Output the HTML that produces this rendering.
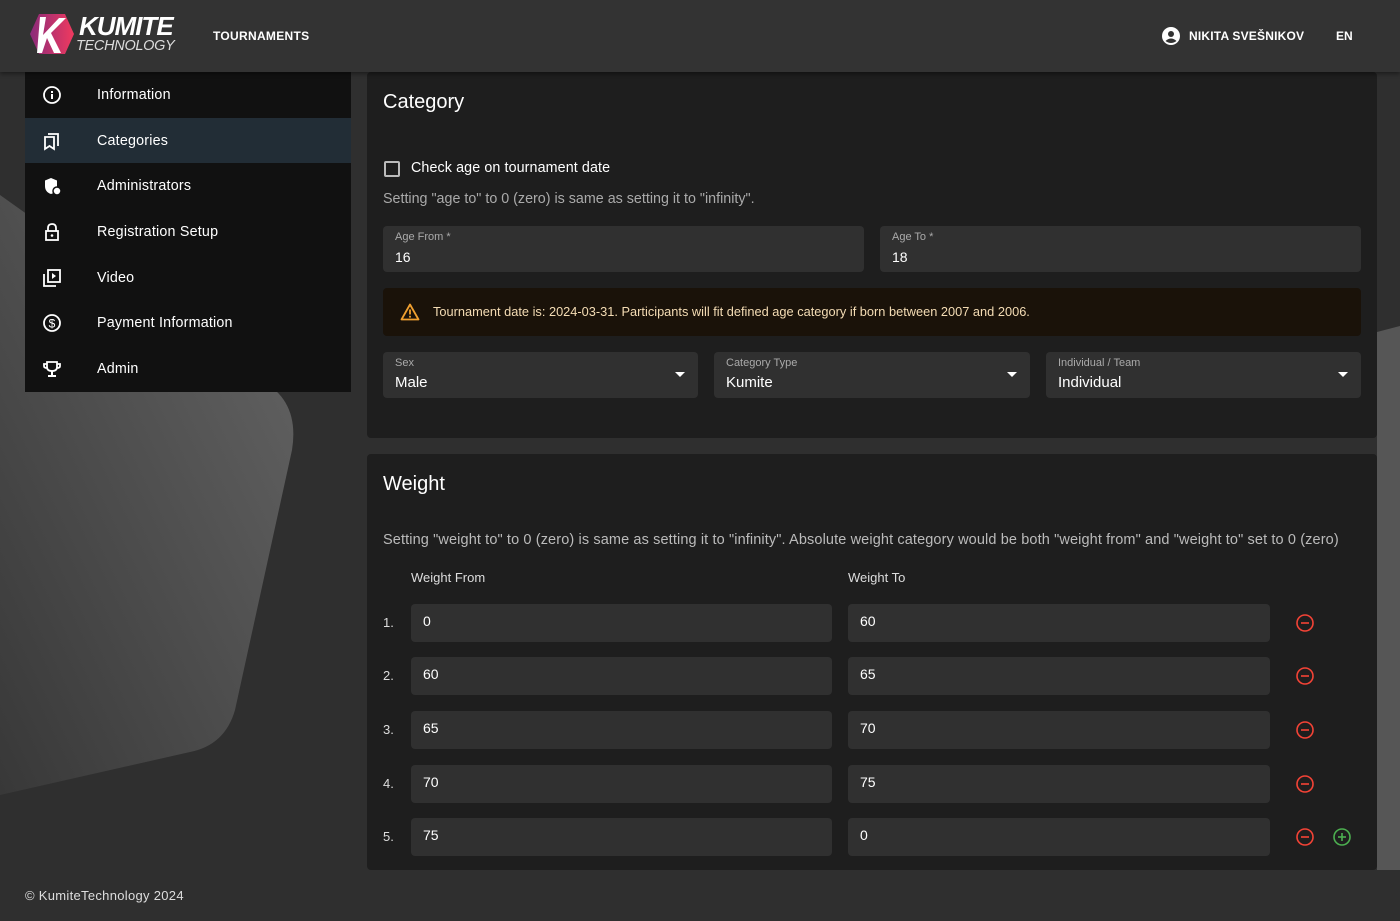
<!DOCTYPE html>
<html><head><meta charset="utf-8"><style>
*{box-sizing:border-box;margin:0;padding:0}
body{width:1400px;height:921px;overflow:hidden;background:#2f2f2f;font-family:"Liberation Sans",sans-serif;color:#fff;position:relative}
.hdr{position:absolute;left:0;top:0;width:1400px;height:72px;background:#333;box-shadow:0 2px 4px rgba(0,0,0,.4);z-index:3}
.side{position:absolute;left:25px;top:72px;width:326px;height:320px;background:#111;z-index:2}
.item{height:45.7px;display:flex;align-items:center;font-size:14.3px;letter-spacing:.2px}
.item svg{margin-left:17px;width:20px;height:20px}
.item span{margin-left:35px}
.item.act{background:#222d36}
.card{position:absolute;left:367px;width:1010px;background:#1e1e1e;border-radius:4px;z-index:2}
.f{position:absolute;background:#303030;border-radius:4px}
.lab{position:absolute;left:12px;top:5px;font-size:11px;color:#aaa}
.val{position:absolute;left:12px;top:22px;font-size:15px}
.arr{position:absolute;right:13px;top:20px;width:0;height:0;border-left:5px solid transparent;border-right:5px solid transparent;border-top:5px solid #fff}
.wi{position:absolute;height:38px;background:#303030;border-radius:4px;font-size:14px;padding:9px 12px}
.ic{position:absolute;width:18px;height:18px}
</style></head><body>
<svg style="position:absolute;left:0;top:0;z-index:0" width="1400" height="921">
<defs><linearGradient id="g" x1="1" y1="0" x2="0" y2="1"><stop offset="0" stop-color="#666"/><stop offset="1" stop-color="#383838"/></linearGradient></defs>
<path d="M0 195 L260 380 Q300 400 292 450 L235 710 Q225 745 190 752 L0 795 Z" fill="url(#g)"/>
<path d="M1377 332 L1400 326 L1400 870 L1377 870 Z" fill="#565656"/>
</svg>
<div class="hdr">
<svg style="position:absolute;left:29px;top:13px" width="46" height="42" viewBox="0 0 46 42"><defs><linearGradient id="lg" x1="0" x2="1"><stop offset="0" stop-color="#8a2a7a"/><stop offset="1" stop-color="#f03a5f"/></linearGradient></defs><path d="M10 1 H36 L45 21 L36 41 H10 L1 21 Z" fill="url(#lg)"/><path d="M11 4 L17 4 L14 22 L30 5 L37 5 L22 20 L32 40 L25 40 L18 25 L13 40 L8 40 Z" fill="#fff"/></svg>
<div style="position:absolute;left:79px;top:11px;font-size:26px;font-weight:bold;font-style:italic;letter-spacing:-1px;line-height:30px">KUMITE</div>
<div style="position:absolute;left:76px;top:38px;font-size:14.5px;font-style:italic;color:#ddd;letter-spacing:-.3px">TECHNOLOGY</div>
<div style="position:absolute;left:213px;top:29px;font-size:12px;font-weight:bold;letter-spacing:.3px">TOURNAMENTS</div>
<svg style="position:absolute;left:1162px;top:27px" width="18" height="18" viewBox="0 0 18 18"><circle cx="9" cy="9" r="9" fill="#fff"/><circle cx="9" cy="7" r="3" fill="#333"/><path d="M3.5 14 Q9 9 14.5 14 Q9 18 3.5 14Z" fill="#333"/></svg>
<div style="position:absolute;left:1189px;top:29px;font-size:12px;font-weight:bold;letter-spacing:.2px">NIKITA SVEŠNIKOV</div>
<div style="position:absolute;left:1336px;top:29px;font-size:12px;font-weight:bold">EN</div>
</div>
<div class="side">
<div class="item"><svg viewBox="0 0 20 20"><circle cx="10" cy="10" r="8" fill="none" stroke="#fff" stroke-width="1.8"/><rect x="9" y="9" width="2" height="5" fill="#fff"/><rect x="9" y="6" width="2" height="2" fill="#fff"/></svg><span>Information</span></div>
<div class="item act"><svg viewBox="0 0 20 20"><path d="M3 6 H12 V18 L7.5 15 L3 18 Z" fill="none" stroke="#fff" stroke-width="1.8"/><path d="M6 3 H16 V15" fill="none" stroke="#fff" stroke-width="1.8"/></svg><span>Categories</span></div>
<div class="item"><svg viewBox="0 0 20 20"><path d="M9 2 L15 4.5 V10 Q15 16 9 18 Q3 16 3 10 V4.5 Z" fill="#fff"/><circle cx="15" cy="15" r="4" fill="#fff" stroke="#111" stroke-width="1.5"/></svg><span>Administrators</span></div>
<div class="item"><svg viewBox="0 0 20 20"><path d="M6 9 V6 Q6 2 10 2 Q14 2 14 6 V9" fill="none" stroke="#fff" stroke-width="1.8"/><rect x="4" y="9" width="12" height="9" fill="none" stroke="#fff" stroke-width="1.8"/><circle cx="10" cy="13.5" r="1.3" fill="#fff"/></svg><span>Registration Setup</span></div>
<div class="item"><svg viewBox="0 0 20 20"><rect x="6" y="2" width="12" height="12" fill="none" stroke="#fff" stroke-width="1.8"/><path d="M2 6 V18 H14" fill="none" stroke="#fff" stroke-width="1.8"/><path d="M10 5 L14 8 L10 11Z" fill="#fff"/></svg><span>Video</span></div>
<div class="item"><svg viewBox="0 0 20 20"><circle cx="10" cy="10" r="8" fill="none" stroke="#fff" stroke-width="1.8"/><text x="10" y="14.5" font-size="12" text-anchor="middle" fill="#fff" font-family="Liberation Sans">$</text></svg><span>Payment Information</span></div>
<div class="item"><svg viewBox="0 0 20 20"><path d="M5 3 H15 V8 Q15 12 10 12 Q5 12 5 8 Z M5 5 H2 V7 Q2 9 5 9 M15 5 H18 V7 Q18 9 15 9" fill="none" stroke="#fff" stroke-width="1.8"/><rect x="9" y="12" width="2" height="4" fill="#fff"/><rect x="6" y="16" width="8" height="2" fill="#fff"/></svg><span>Admin</span></div>
</div>

<div class="card" style="top:72px;height:366px">
<div style="position:absolute;left:16px;top:19px;font-size:20px">Category</div>
<div style="position:absolute;left:17px;top:89px;width:16px;height:16px;border:2px solid #bbb;border-radius:2px"></div>
<div style="position:absolute;left:44px;top:88px;font-size:14.3px;letter-spacing:.1px">Check age on tournament date</div>
<div style="position:absolute;left:16px;top:119px;font-size:14.3px;color:#aaa">Setting "age to" to 0 (zero) is same as setting it to "infinity".</div>
<div class="f" style="left:16px;top:154px;width:481px;height:46px"><div class="lab">Age From *</div><div class="val" style="font-size:14px;top:23px">16</div></div>
<div class="f" style="left:513px;top:154px;width:481px;height:46px"><div class="lab">Age To *</div><div class="val" style="font-size:14px;top:23px">18</div></div>
<div style="position:absolute;left:16px;top:216px;width:978px;height:48px;background:#1a1209;border-radius:4px">
<svg style="position:absolute;left:17px;top:15px" width="20" height="18" viewBox="0 0 20 18"><path d="M10 1.5 L18.5 16.5 H1.5 Z" fill="none" stroke="#f0a030" stroke-width="1.8" stroke-linejoin="round"/><rect x="9.1" y="6.5" width="1.8" height="5" fill="#f0a030"/><rect x="9.1" y="12.8" width="1.8" height="1.8" fill="#f0a030"/></svg>
<div style="position:absolute;left:50px;top:16px;font-size:12.8px;color:#f4dcb4">Tournament date is: 2024-03-31. Participants will fit defined age category if born between 2007 and 2006.</div></div>
<div class="f" style="left:16px;top:280px;width:315px;height:46px"><div class="lab">Sex</div><div class="val">Male</div><div class="arr"></div></div>
<div class="f" style="left:347px;top:280px;width:316px;height:46px"><div class="lab">Category Type</div><div class="val">Kumite</div><div class="arr"></div></div>
<div class="f" style="left:679px;top:280px;width:315px;height:46px"><div class="lab">Individual / Team</div><div class="val">Individual</div><div class="arr"></div></div>
</div>

<div class="card" style="top:454px;height:416px">
<div style="position:absolute;left:16px;top:19px;font-size:20px">Weight</div>
<div style="position:absolute;left:16px;top:78px;font-size:14.5px;letter-spacing:.12px;color:#bbb">Setting "weight to" to 0 (zero) is same as setting it to "infinity". Absolute weight category would be both "weight from" and "weight to" set to 0 (zero)</div>
<div style="position:absolute;left:44px;top:116px;font-size:13px;color:#ddd">Weight From</div>
<div style="position:absolute;left:481px;top:116px;font-size:13px;color:#ddd">Weight To</div>
</div>
<div id="rows"></div>
<div style="position:absolute;left:25px;top:888px;font-size:13px;color:#ddd;letter-spacing:.3px">© KumiteTechnology 2024</div>
<script>
var d=[[0,60],[60,65],[65,70],[70,75],[75,0]],ys=[604,657,711,765,818],h='';
d.forEach(function(r,i){var y=ys[i];
h+='<div style="position:absolute;z-index:3;left:383px;top:'+(y+11)+'px;font-size:13px;color:#ddd">'+(i+1)+'.</div>';
h+='<div class="wi" style="z-index:3;left:411px;top:'+y+'px;width:421px">'+r[0]+'</div>';
h+='<div class="wi" style="z-index:3;left:848px;top:'+y+'px;width:422px">'+r[1]+'</div>';
h+='<svg class="ic" style="z-index:3;left:1296px;top:'+(y+10)+'px" viewBox="0 0 18 18"><circle cx="9" cy="9" r="8" fill="none" stroke="#f44336" stroke-width="1.6"/><rect x="5" y="8.2" width="8" height="1.6" fill="#f44336"/></svg>';
if(i==4)h+='<svg class="ic" style="z-index:3;left:1333px;top:'+(y+10)+'px" viewBox="0 0 18 18"><circle cx="9" cy="9" r="8" fill="none" stroke="#4caf50" stroke-width="1.6"/><rect x="5" y="8.2" width="8" height="1.6" fill="#4caf50"/><rect x="8.2" y="5" width="1.6" height="8" fill="#4caf50"/></svg>';
});
document.getElementById('rows').innerHTML=h;
</script>
</body></html>
